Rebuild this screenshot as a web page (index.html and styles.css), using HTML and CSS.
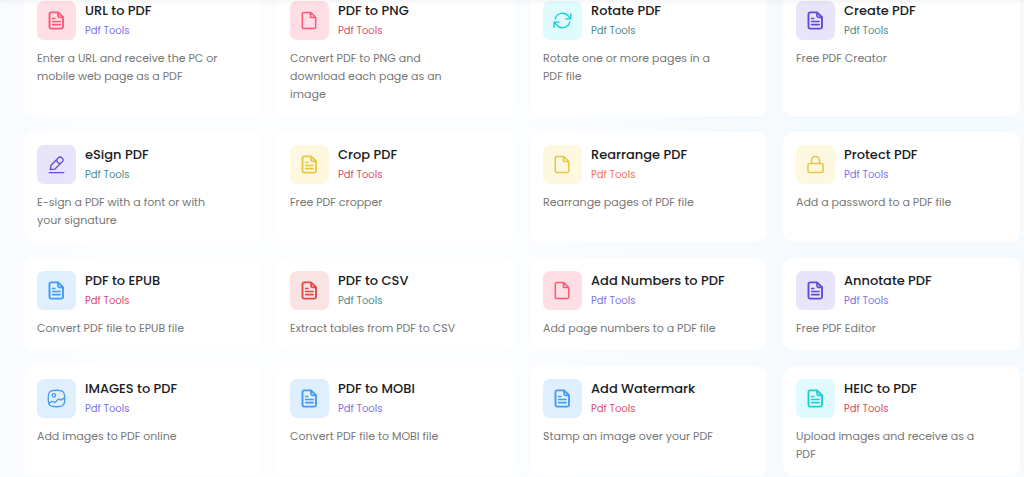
FILE: index.html
```html
<!DOCTYPE html>
<html lang="en">
<head>
<meta charset="utf-8">
<meta name="viewport" content="width=device-width, initial-scale=1">
<title>PDF Tools</title>
<link rel="stylesheet" href="styles.css">
</head>
<body>
<svg class="sprite" aria-hidden="true">
  <symbol id="doc" viewBox="0 0 19 19"><path d="M4 1.400h7l5 4.900v9.800a1.500 1.500 0 0 1-1.500 1.500H4a1.500 1.500 0 0 1-1.500-1.500V2.900A1.500 1.500 0 0 1 4 1.400z" stroke-width="1.900"/><path d="M11 1.600v3.200a1.500 1.500 0 0 0 1.500 1.500h3.200" stroke-width="1.700"/><path d="M5.600 7.500h2.200M5.600 10.500h7.500M5.600 13.600h7.500" stroke-width="1.600"/></symbol>
  <symbol id="file" viewBox="0 0 19 19"><path d="M3.800 1.400h7l4.900 5v9.700a1.500 1.500 0 0 1-1.500 1.500H3.800a1.500 1.500 0 0 1-1.500-1.500V2.900a1.500 1.500 0 0 1 1.500-1.500zM10.500 1.700v4.700h5" stroke-width="1.500"/></symbol>
  <symbol id="rotate" viewBox="0 0 20 20"><path d="M2.300 8.300a8 8 0 0 1 14.300-2.400l2 2.300M18.700 3v5.300h-5.300M17.700 11.700a8 8 0 0 1-14.300 2.400l-2-2.400M1.200 17v-5.300h5.300" stroke-width="1.500"/></symbol>
  <symbol id="pen" viewBox="0 0 20 20"><path d="M2.200 18.500h15.500M3.500 15.300l.7-4.500 7.900-7.900a2.400 2.400 0 0 1 3.500 0l.6.600a2.400 2.400 0 0 1 0 3.500l-7.800 7.800zM9.900 5.200c.5 2.100 1.800 3.500 4 4" stroke-width="1.400"/></symbol>
  <symbol id="lock" viewBox="0 0 19 19"><rect x="2" y="8.400" width="15" height="9.200" rx="1.300" stroke-width="1.500"/><path d="M5.500 8.400V5.500a4 4 0 0 1 8 0v2.900" stroke-width="1.500"/></symbol>
  <symbol id="image" viewBox="0 0 20 20"><path d="M10 1.300c7 0 8.700 1.700 8.700 8.700s-1.700 8.700-8.700 8.700-8.700-1.700-8.700-8.700S3 1.300 10 1.300z" stroke-width="1.400"/><circle cx="7.300" cy="6.700" r="1.800" stroke-width="1.300"/><path d="M2 15l3-1.800c1.300-.8 2 .8 3.200.8 1.800 0 2.700-3.600 4.300-3.300 1 .2 1.400 1.200 2.500.8l3.300-2.200" stroke-width="1.400"/></symbol>
</svg>
<div class="topbar"></div>
<main class="tools">
  <a class="card" href="#url-to-pdf">
    <div class="head"><span class="icon pink"><svg><use href="#doc"/></svg></span><div><h2 class="title">URL to PDF</h2><span class="tag tag-violet">Pdf Tools</span></div></div>
    <p class="desc">Enter a URL and receive the PC or mobile web page as a PDF</p>
  </a>
  <a class="card" href="#pdf-to-png">
    <div class="head"><span class="icon pink"><svg><use href="#file"/></svg></span><div><h2 class="title">PDF to PNG</h2><span class="tag tag-rose">Pdf Tools</span></div></div>
    <p class="desc">Convert PDF to PNG and download each page as an image</p>
  </a>
  <a class="card" href="#rotate-pdf">
    <div class="head"><span class="icon cyan"><svg><use href="#rotate"/></svg></span><div><h2 class="title">Rotate PDF</h2><span class="tag tag-teal">Pdf Tools</span></div></div>
    <p class="desc">Rotate one or more pages in a PDF file</p>
  </a>
  <a class="card" href="#create-pdf">
    <div class="head"><span class="icon purple"><svg><use href="#doc"/></svg></span><div><h2 class="title">Create PDF</h2><span class="tag tag-teal">Pdf Tools</span></div></div>
    <p class="desc">Free PDF Creator</p>
  </a>
  <a class="card" href="#esign-pdf">
    <div class="head"><span class="icon purple"><svg><use href="#pen"/></svg></span><div><h2 class="title">eSign PDF</h2><span class="tag tag-teal">Pdf Tools</span></div></div>
    <p class="desc">E-sign a PDF with a font or with your signature</p>
  </a>
  <a class="card" href="#crop-pdf">
    <div class="head"><span class="icon yellow"><svg><use href="#doc"/></svg></span><div><h2 class="title">Crop PDF</h2><span class="tag tag-rose">Pdf Tools</span></div></div>
    <p class="desc">Free PDF cropper</p>
  </a>
  <a class="card" href="#rearrange-pdf">
    <div class="head"><span class="icon yellow"><svg><use href="#file"/></svg></span><div><h2 class="title">Rearrange PDF</h2><span class="tag tag-orange">Pdf Tools</span></div></div>
    <p class="desc">Rearrange pages of PDF file</p>
  </a>
  <a class="card" href="#protect-pdf">
    <div class="head"><span class="icon yellow"><svg><use href="#lock"/></svg></span><div><h2 class="title">Protect PDF</h2><span class="tag tag-violet">Pdf Tools</span></div></div>
    <p class="desc">Add a password to a PDF file</p>
  </a>
  <a class="card" href="#pdf-to-epub">
    <div class="head"><span class="icon blue"><svg><use href="#doc"/></svg></span><div><h2 class="title">PDF to EPUB</h2><span class="tag tag-rose">Pdf Tools</span></div></div>
    <p class="desc">Convert PDF file to EPUB file</p>
  </a>
  <a class="card" href="#pdf-to-csv">
    <div class="head"><span class="icon red"><svg><use href="#doc"/></svg></span><div><h2 class="title">PDF to CSV</h2><span class="tag tag-teal">Pdf Tools</span></div></div>
    <p class="desc">Extract tables from PDF to CSV</p>
  </a>
  <a class="card" href="#add-numbers">
    <div class="head"><span class="icon pink"><svg><use href="#file"/></svg></span><div><h2 class="title">Add Numbers to PDF</h2><span class="tag tag-violet">Pdf Tools</span></div></div>
    <p class="desc">Add page numbers to a PDF file</p>
  </a>
  <a class="card" href="#annotate-pdf">
    <div class="head"><span class="icon purple"><svg><use href="#doc"/></svg></span><div><h2 class="title">Annotate PDF</h2><span class="tag tag-violet">Pdf Tools</span></div></div>
    <p class="desc">Free PDF Editor</p>
  </a>
  <a class="card" href="#images-to-pdf">
    <div class="head"><span class="icon blue"><svg><use href="#image"/></svg></span><div><h2 class="title">IMAGES to PDF</h2><span class="tag tag-violet">Pdf Tools</span></div></div>
    <p class="desc">Add images to PDF online</p>
  </a>
  <a class="card" href="#pdf-to-mobi">
    <div class="head"><span class="icon blue"><svg><use href="#doc"/></svg></span><div><h2 class="title">PDF to MOBI</h2><span class="tag tag-violet">Pdf Tools</span></div></div>
    <p class="desc">Convert PDF file to MOBI file</p>
  </a>
  <a class="card" href="#add-watermark">
    <div class="head"><span class="icon blue"><svg><use href="#doc"/></svg></span><div><h2 class="title">Add Watermark</h2><span class="tag tag-rose">Pdf Tools</span></div></div>
    <p class="desc">Stamp an image over your PDF</p>
  </a>
  <a class="card" href="#heic-to-pdf">
    <div class="head"><span class="icon cyan"><svg><use href="#doc"/></svg></span><div><h2 class="title">HEIC to PDF</h2><span class="tag tag-red">Pdf Tools</span></div></div>
    <p class="desc">Upload images and receive as a PDF</p>
  </a>
</main>
</body>
</html>
```
FILE: styles.css
```css
* {
  box-sizing: border-box;
}

body {
  margin: 0;
  min-height: 100vh;
  display: flow-root;
  background: linear-gradient(90deg, #f9fcff 0%, #fcfdff 10%, #fbfdff 50%, #f5fafe 78%, #f4fafe 100%);
  font-family: Poppins, Inter, "Open Sans", sans-serif;
}

.sprite {
  display: none;
}

.topbar {
  position: fixed;
  inset: 0 0 auto;
  height: 0;
  box-shadow: 0 0 4px 1px rgba(0, 0, 0, 0.1);
}

.tools {
  display: grid;
  grid-template-columns: repeat(4, minmax(0, 1fr));
  gap: 16px;
  margin-top: -12px;
  padding: 0 4px 0 24px;
}

.card {
  padding: 13px;
  border-radius: 10px;
  background: #fff;
  color: inherit;
  text-decoration: none;
}

.head {
  display: flex;
  gap: 9px;
}

.icon {
  display: flex;
  flex: none;
  align-items: center;
  justify-content: center;
  width: 39px;
  height: 39px;
  border-radius: 7px;
}

.icon svg {
  width: 19px;
  height: 19px;
  fill: none;
  stroke: currentColor;
  stroke-linecap: round;
  stroke-linejoin: round;
}

.pink { background: #ffdfe5; color: #ff5876; }
.cyan { background: #e0fbfd; color: #18cfd6; }
.purple { background: #e8e4f9; color: #6549d5; }
.yellow { background: #fef8e0; color: #e4c742; }
.blue { background: #e0effe; color: #429bf5; }
.red { background: #fae4e3; color: #e24a45; }

.title {
  margin: 0 0 2px;
  color: #191c1f;
  font-size: 13px;
  font-weight: 500;
  line-height: 20px;
}

.tag {
  display: block;
  font-size: 10px;
  line-height: 16px;
}

.tag-violet { color: #7b6fea; }
.tag-rose { color: #dc4a6e; }
.tag-teal { color: #4a8a88; }
.tag-orange { color: #f6704f; }
.tag-red { color: #db4c58; }

.desc {
  margin: 9px 0 0;
  padding-right: 28px;
  color: #777;
  font-size: 11px;
  line-height: 18px;
}
```
